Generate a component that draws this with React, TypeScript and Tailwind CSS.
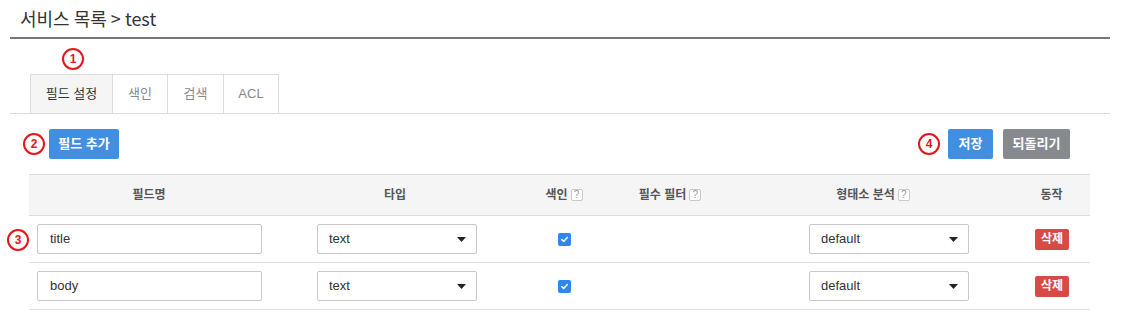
import React from "react";

const FONT = { fontFamily: '"Liberation Sans", "Noto Sans CJK KR", sans-serif' };

function Badge({ n }: { n: string }) {
  return (
    <div className="w-[22px] h-[22px] rounded-full border-2 border-[#e8141b] bg-white flex items-center justify-center text-[12px] font-bold text-[#e8141b] leading-none">
      {n}
    </div>
  );
}

function Help() {
  return (
    <span className="inline-flex items-center justify-center w-[12px] h-[12px] border border-[#c8c8c8] rounded-[2px] text-[10px] text-[#999] leading-none ml-[3px] bg-white font-normal">
      ?
    </span>
  );
}

function Select({ value }: { value: string }) {
  return (
    <div className="w-[160px] h-[30px] border border-[#c8c8c8] rounded-[2px] bg-white flex items-center justify-between pl-[11px] pr-[10px] text-[13px] text-[#333]">
      <span>{value}</span>
      <svg width="9" height="5" viewBox="0 0 9 5">
        <path d="M0 0 L9 0 L4.5 5 Z" fill="#222" />
      </svg>
    </div>
  );
}

function Check() {
  return (
    <div className="w-[13px] h-[13px] rounded-[2px] bg-[#2f86eb] flex items-center justify-center">
      <svg width="9" height="9" viewBox="0 0 9 9">
        <path d="M1.8 4.6 L3.7 6.4 L7.3 2.6" stroke="white" strokeWidth="1.5" fill="none" strokeLinecap="round" strokeLinejoin="round" />
      </svg>
    </div>
  );
}

function Row({ name, badge }: { name: string; badge?: boolean }) {
  return (
    <div className="relative flex h-[47px] border-b border-[#e0e0e0] items-center">
      {badge && (
        <div className="absolute left-[-22px] top-[13px]">
          <Badge n="3" />
        </div>
      )}
      <div className="w-[240px] pl-[8px] pr-[7px]">
        <div className="h-[30px] border border-[#c8c8c8] rounded-[2px] flex items-center pl-[12px] text-[13px] text-[#333]">
          {name}
        </div>
      </div>
      <div className="w-[252px] flex justify-center pl-[4px]">
        <Select value="text" />
      </div>
      <div className="w-[86px] flex justify-center pl-[1px]">
        <Check />
      </div>
      <div className="w-[126px]" />
      <div className="w-[280px] pl-[76px]">
        <Select value="default" />
      </div>
      <div className="w-[77px] flex justify-center pl-[1px]">
        <div className="w-[34px] h-[21px] rounded-[2px] bg-[#d74b47] text-white text-[12px] font-bold flex items-center justify-center">
          삭제
        </div>
      </div>
    </div>
  );
}

export default function App() {
  return (
    <div className="w-[1123px] h-[323px] bg-white overflow-hidden" style={FONT}>
      <div className="h-[37px] pl-[20px] pt-[6px] text-[18px] text-[#333] leading-[24px]" style={{ fontFamily: '"Noto Sans CJK KR", sans-serif' }}>
        서비스 목록 &gt; test
      </div>
      <div className="ml-[10px] mr-[13px] h-[2px] bg-[#777]" />
      <div className="pl-[62px] pt-[9px]">
        <Badge n="1" />
      </div>
      <div className="ml-[10px] mr-[13px] mt-[4px] border-b border-[#dcdcdc] pl-[20px] flex">
        <div className="w-[83px] h-[39px] border border-b-0 border-[#dcdcdc] bg-[#f5f5f5] flex items-center justify-center text-[13px] text-[#333]">
          필드 설정
        </div>
        <div className="w-[55px] h-[39px] border border-l-0 border-b-0 border-[#dcdcdc] flex items-center justify-center text-[13px] text-[#888]">
          색인
        </div>
        <div className="w-[56px] h-[39px] border border-l-0 border-b-0 border-[#dcdcdc] flex items-center justify-center text-[13px] text-[#888]">
          검색
        </div>
        <div className="w-[55px] h-[39px] border border-l-0 border-b-0 border-[#dcdcdc] flex items-center justify-center text-[13px] text-[#888]">
          ACL
        </div>
      </div>
      <div className="mt-[15px] pl-[23px] pr-[53px] flex items-center">
        <Badge n="2" />
        <div className="ml-[4px] w-[70px] h-[30px] rounded-[2px] bg-[#428ee0] text-white text-[13px] font-bold flex items-center justify-center">
          필드 추가
        </div>
        <div className="flex-1" />
        <Badge n="4" />
        <div className="ml-[8px] w-[45px] h-[30px] rounded-[2px] bg-[#428ee0] text-white text-[13px] font-bold flex items-center justify-center">
          저장
        </div>
        <div className="ml-[10px] w-[67px] h-[30px] rounded-[2px] bg-[#868a8e] text-white text-[13px] font-bold flex items-center justify-center">
          되돌리기
        </div>
      </div>
      <div className="mt-[15px] ml-[29px] w-[1061px]">
        <div className="flex h-[42px] items-center bg-[#f5f5f5] border-t border-b border-[#dcdcdc] text-[12px] font-bold text-[#555]">
          <div className="w-[240px] text-center">필드명</div>
          <div className="w-[252px] text-center">타입</div>
          <div className="w-[86px] flex items-center justify-center">색인<Help /></div>
          <div className="w-[126px] flex items-center justify-center">필수 필터<Help /></div>
          <div className="w-[280px] flex items-center justify-center">형태소 분석<Help /></div>
          <div className="w-[77px] text-center">동작</div>
        </div>
        <Row name="title" badge />
        <Row name="body" />
      </div>
    </div>
  );
}
